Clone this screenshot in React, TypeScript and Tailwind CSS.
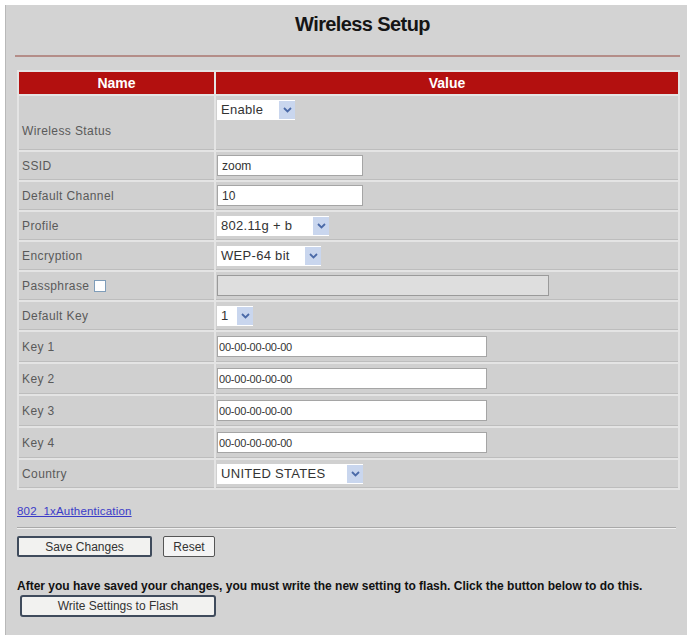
import { useState } from 'react';

type Row = {
  label: string;
  kind: 'select' | 'input' | 'disabled';
  value: string;
  width: number;
  check?: boolean;
  tall?: boolean;
  mono?: boolean;
};

const rows: Row[] = [
  { label: 'Wireless Status', kind: 'select', value: 'Enable', width: 78, tall: true },
  { label: 'SSID', kind: 'input', value: 'zoom', width: 146 },
  { label: 'Default Channel', kind: 'input', value: '10', width: 146 },
  { label: 'Profile', kind: 'select', value: '802.11g + b', width: 112 },
  { label: 'Encryption', kind: 'select', value: 'WEP-64 bit', width: 104 },
  { label: 'Passphrase', kind: 'disabled', value: '', width: 332, check: true },
  { label: 'Default Key', kind: 'select', value: '1', width: 36 },
  { label: 'Key 1', kind: 'input', value: '00-00-00-00-00', width: 270, mono: true },
  { label: 'Key 2', kind: 'input', value: '00-00-00-00-00', width: 270, mono: true },
  { label: 'Key 3', kind: 'input', value: '00-00-00-00-00', width: 270, mono: true },
  { label: 'Key 4', kind: 'input', value: '00-00-00-00-00', width: 270, mono: true },
  { label: 'Country', kind: 'select', value: 'UNITED STATES', width: 146 },
];

function FakeSelect({ value, width }: { value: string; width: number }) {
  return (
    <div
      className="flex h-[20px] items-center justify-between bg-white pl-[4px] text-[13px] tracking-[0.3px] text-[#333]"
      style={{ width }}
    >
      <span>{value}</span>
      <span className="flex h-[18px] w-[16px] items-center justify-center bg-[#c9d6ee]">
        <svg width="9" height="6" viewBox="0 0 9 6">
          <path d="M1 1 L4.5 4.5 L8 1" fill="none" stroke="#4b6aa8" strokeWidth="1.8" />
        </svg>
      </span>
    </div>
  );
}

export default function App() {
  const [values, setValues] = useState(rows.map((r) => r.value));

  return (
    <div className="h-[635px] w-[687px] overflow-hidden bg-white pl-[5px] pt-[5px] font-['Liberation_Sans',Arial,sans-serif]">
      <div className="h-full border-l border-[#b8b8b8] bg-[#d3d3d3] px-[11px]">
        <h1 className="pl-[32px] pt-[7px] text-center text-[20px] font-bold leading-[24px] tracking-[-0.6px] text-[#151515]">
          Wireless Setup
        </h1>
        <div className="mt-[19px] ml-[-2px] mr-[-4px] h-[2px] bg-[#b48d88]" />

        <table className="mt-[13px] w-[663px] border-separate border-spacing-[2px] bg-[#e4e4e4]">
          <thead>
            <tr>
              <th className="h-[22px] w-[195px] bg-[#b3100f] text-[14px] font-bold text-white">Name</th>
              <th className="h-[22px] bg-[#b3100f] text-[14px] font-bold text-white">Value</th>
            </tr>
          </thead>
          <tbody>
            {rows.map((r, i) => (
              <tr key={r.label}>
                <td
                  className={`border-b border-[#bdbdbd] bg-[#d0d0d0] pl-[3px] text-[12px] tracking-[0.4px] text-[#5a5a5a] ${r.tall ? 'h-[54px] pt-[16px]' : r.mono ? 'h-[30px]' : 'h-[28px]'}`}
                >
                  <span className="flex items-center gap-[5px]">
                    {r.label}
                    {r.check && <span className="inline-block h-[12px] w-[12px] border border-[#7f9db9] bg-white" />}
                  </span>
                </td>
                <td className={`border-b border-[#bdbdbd] bg-[#d0d0d0] pl-[1px] ${r.tall ? 'pt-[4px] align-top' : ''}`}>
                  {r.kind === 'select' && <FakeSelect value={r.value} width={r.width} />}
                  {r.kind === 'input' && (
                    <input
                      value={values[i]}
                      onChange={(e) => setValues(values.map((v, j) => (j === i ? e.target.value : v)))}
                      className={`block h-[21px] border border-[#a5a5a5] bg-white text-[#333] outline-none ${r.mono ? 'px-[1px] text-[11px] tracking-[-0.2px]' : 'pl-[4px] text-[12px]'}`}
                      style={{ width: r.width }}
                    />
                  )}
                  {r.kind === 'disabled' && (
                    <div className="h-[21px] border border-[#9a9a9a] bg-[#dedede]" style={{ width: r.width }} />
                  )}
                </td>
              </tr>
            ))}
          </tbody>
        </table>

        <div className="mt-[13px] leading-[14px]">
          <a href="#" className="text-[11.5px] tracking-[0.2px] text-[#3b3bc8] underline">
            802_1xAuthentication
          </a>
        </div>
        <div className="mt-[9px] h-[2px] border-b border-[#f0f0f0] bg-[#a9a9a9]" />

        <div className="mt-[7px] flex gap-[11px]">
          <button className="h-[21px] w-[135px] rounded-[2px] border-2 border-[#3f4b5c] bg-[#f2f2f0] text-[12px] text-[#333]">
            Save Changes
          </button>
          <button className="h-[21px] w-[52px] rounded-[2px] border border-[#555] bg-[#f4f4f4] text-[12px] text-[#333]">
            Reset
          </button>
        </div>

        <p className="mt-[22px] text-[12px] font-bold leading-[14px] text-[#111]">
          After you have saved your changes, you must write the new setting to flash. Click the button below to do this.
        </p>
        <button className="ml-[3px] mt-[-1px] h-[22px] w-[196px] rounded-[3px] border-2 border-[#3f4b5c] bg-[#f2f2f0] text-[12px] text-[#333]">
          Write Settings to Flash
        </button>
      </div>
    </div>
  );
}
